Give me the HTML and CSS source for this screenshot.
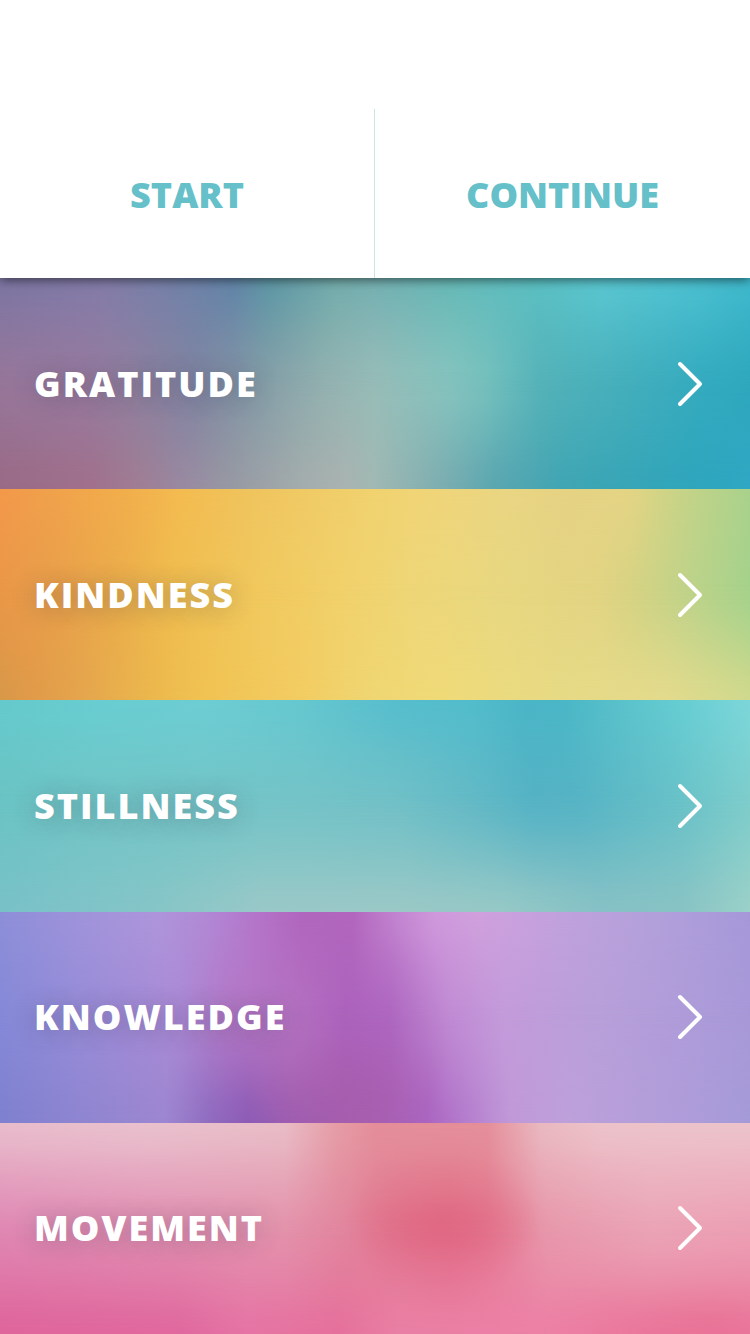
FILE: index.html
```html
<!DOCTYPE html>
<html lang="en">
<head>
<meta charset="utf-8">
<meta name="viewport" content="width=device-width, initial-scale=1">
<title>Themes</title>
<link rel="stylesheet" href="styles.css">
</head>
<body>
<svg class="sprite" aria-hidden="true">
  <symbol id="chevron" viewBox="0 0 28 48"><path d="M4 4 24 24 4 44" /></symbol>
</svg>
<div class="screen">
  <header class="top">
    <button class="top-action" type="button">START</button>
    <button class="top-action" type="button">CONTINUE</button>
  </header>
  <main class="themes">
    <a class="theme gratitude" href="#gratitude"><span class="theme-name">GRATITUDE</span><svg class="chevron" aria-hidden="true"><use href="#chevron"/></svg></a>
    <a class="theme kindness" href="#kindness"><span class="theme-name">KINDNESS</span><svg class="chevron" aria-hidden="true"><use href="#chevron"/></svg></a>
    <a class="theme stillness" href="#stillness"><span class="theme-name">STILLNESS</span><svg class="chevron" aria-hidden="true"><use href="#chevron"/></svg></a>
    <a class="theme knowledge" href="#knowledge"><span class="theme-name">KNOWLEDGE</span><svg class="chevron" aria-hidden="true"><use href="#chevron"/></svg></a>
    <a class="theme movement" href="#movement"><span class="theme-name">MOVEMENT</span><svg class="chevron" aria-hidden="true"><use href="#chevron"/></svg></a>
  </main>
</div>
</body>
</html>
```

FILE: styles.css
```css
* { box-sizing: border-box; }

body {
  margin: 0;
  font-family: "Open Sans", "Noto Sans", sans-serif;
}

.sprite {
  position: absolute;
  width: 0;
  height: 0;
}

.screen {
  display: flex;
  flex-direction: column;
  min-height: 100vh;
}

.top {
  display: grid;
  grid-template-columns: 1fr 1fr;
  padding-top: 109px;
  background: #fff;
  box-shadow: 0 2px 10px rgba(0, 0, 0, 0.55);
  z-index: 1;
}

.top-action {
  min-height: 169px;
  padding: 2px 0 0;
  border: 0;
  background: none;
  color: #65c0c9;
  font: inherit;
  font-size: 36px;
  font-weight: 800;
}

.top-action:first-child { border-right: 1px solid #cde5e0; }

.themes {
  flex: 1;
  display: grid;
  grid-auto-rows: 1fr;
}

/* Each theme blends three horizontal colour bands: top, middle and bottom. */
.theme {
  position: relative;
  isolation: isolate;
  display: flex;
  align-items: center;
  justify-content: space-between;
  min-height: 160px;
  padding: 0 46px 0 34px;
  background: var(--middle);
  color: #fff;
  text-decoration: none;
}

.theme::before,
.theme::after {
  content: "";
  position: absolute;
  inset: 0;
  z-index: -1;
}

.theme::before {
  background: var(--upper);
  mask-image: linear-gradient(#000, rgba(0, 0, 0, 0.85) 10%, rgba(0, 0, 0, 0.48) 26%, rgba(0, 0, 0, 0.14) 42%, transparent 56%);
}

.theme::after {
  background: var(--lower);
  mask-image: linear-gradient(transparent 44%, rgba(0, 0, 0, 0.14) 58%, rgba(0, 0, 0, 0.48) 74%, rgba(0, 0, 0, 0.85) 90%, #000);
}

.theme-name {
  font-size: 36px;
  font-weight: 800;
  line-height: 48px;
  letter-spacing: 2px;
  text-shadow: 0 2px 24px rgba(60, 60, 80, 0.32);
}

.chevron {
  width: 28px;
  height: 48px;
  fill: none;
  stroke: #fff;
  stroke-width: 4;
  stroke-linecap: round;
  stroke-linejoin: round;
}

.gratitude {
  --upper: linear-gradient(90deg, #7d76a3, #837ca8 14%, #7581a8 23%, #6284a8 31%, #5e97a5 36%, #74adac 45%, #76b0b2 50%, #67b9b7 60%, #5bbfc2 72%, #5ac6d0 80%, #4cc0d0 92%, #3fb8cc);
  --middle: linear-gradient(90deg, #97779a, #987a9f 11%, #917f9f 17%, #8085a2 26%, #859ea8 35%, #93b1b0 43%, #98bdb8 50%, #86c4bf 60%, #76c1be 65%, #55b3b9 72%, #45afbc 83%, #35abbf 93%, #2ea8bd);
  --lower: linear-gradient(90deg, #996a86, #a0708c 12%, #a07c93 18%, #9988a0 24%, #9799a3 31%, #a3acac 40%, #a9b3b0 46%, #a0b8b3 50%, #80aeb0 58%, #5aa6b0 66%, #40a5b3 75%, #38a5b6 83%, #2ea5bc 93%, #30a7c4);
}

.kindness {
  --upper: linear-gradient(90deg, #f2984a, #f09f4b 5%, #f1ae4c 17%, #f3bb50 24%, #efc35d 33%, #f0d26f 50%, #f0d478 57%, #e9d582 67%, #e5d283 75%, #e3d484 84%, #c5d387 91%, #a9d18c);
  --middle: linear-gradient(90deg, #ea9848, #e9a04a 8%, #ebae4b 16%, #f0bd4f 23%, #f1c85c 33%, #f2d16a 45%, #eed779 56%, #e8d881 67%, #e2d483 80%, #d4d384 85%, #bed38a 92%, #a5d28c);
  --lower: linear-gradient(90deg, #d79848, #e09a49 4%, #e5a74d 12%, #ebb74d 20%, #f0c252 27%, #f2cc62 40%, #efd672 50%, #efda78 59%, #e6da85 75%, #e3da8c 89%, #cfd98d);
}

.stillness {
  --upper: linear-gradient(90deg, #65c9cb, #68cdd0 13%, #6ccdd2 27%, #65c7cf 40%, #56bdcc 53%, #52bccb 63%, #4ab5c6 70%, #4ab6c6 75%, #58c0ca 82%, #66cdd2 91%, #7cd6d9);
  --middle: linear-gradient(90deg, #6bc4c4, #72c5c6 13%, #75c4c7 40%, #72c1c7 53%, #62b9c6 64%, #55b3c5 71%, #56b4c5 77%, #68c1c8 90%, #7ecdcb);
  --lower: linear-gradient(90deg, #78c1c7, #85c5c7 20%, #99c8c7 35%, #9ac8c6 53%, #96c8c6 67%, #86c1c5 80%, #88c3c4 91%, #9bd0c8);
}

.knowledge {
  --upper: linear-gradient(90deg, #8d8ed8, #9f93da 11%, #ae95da 21%, #b187d4 28%, #b475c9 34%, #b066bd 40%, #b266bd 47%, #c080cd 52%, #cf98dc 58%, #cfa0dc 64%, #c0a1dc 75%, #b2a0da 87%, #a598d9);
  --middle: linear-gradient(90deg, #8589d8, #988cd8 11%, #ab8ad6 24%, #b479c8 30%, #b572c2 39%, #ac63bd 46%, #ae66c0 52%, #c18bd4 60%, #c49bdb 67%, #b8a0da 80%, #a899d9);
  --lower: radial-gradient(ellipse 14% 50% at 46% 68%, #a55aa6, rgba(165, 90, 166, 0)), linear-gradient(90deg, #7e80cf, #8f85d0 11%, #9d86d0 22%, #8f6bbf 28%, #8d5bb5 33%, #9d5eb2 39%, #a760b2 48%, #aa64c0 57%, #b47ccd 62%, #c098d8 68%, #bda0da 76%, #a59ad8);
}

.movement {
  --upper: linear-gradient(90deg, #e8bccb, #e9c0cd 20%, #e8bcc6 38%, #e59ca5 45%, #e48e9a 50%, #e48f9a 65%, #e9b8c0 72%, #ecc2c9 80%, #ecc3cb);
  --middle: radial-gradient(ellipse 13% 38% at 59% 46%, #e06580, rgba(224, 101, 128, 0)), linear-gradient(90deg, #e088b4, #e28fb2 20%, #e493ac 38%, #e2849c 47%, #e17890 53%, #e17088 60%, #e57a92 65%, #e898ab 73%, #eba5b6 87%, #eda0b4);
  --lower: radial-gradient(ellipse 22% 38% at 94% 92%, #e87095, rgba(232, 112, 149, 0)), linear-gradient(90deg, #de659b, #e0689e 24%, #e574a4 33%, #e5709b 45%, #e97fa4 53%, #ec80a5 75%, #eb7fa2);
}
```
